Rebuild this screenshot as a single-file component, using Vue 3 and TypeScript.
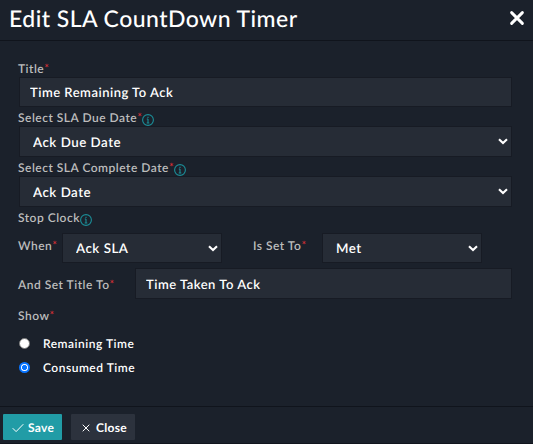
<script setup lang="ts">
import { ref } from 'vue'

const title = ref('Time Remaining To Ack')
const dueDate = ref('Ack Due Date')
const completeDate = ref('Ack Date')
const clock = ref('Ack SLA')
const state = ref('Met')
const stoppedTitle = ref('Time Taken To Ack')
const show = ref('Consumed Time')
const showOptions: string[] = ['Remaining Time', 'Consumed Time']
</script>

<template>
  <form class="dialog" @submit.prevent>
    <header class="header">
      <h1>Edit SLA CountDown Timer</h1>
      <button type="button" class="dismiss" aria-label="Close dialog">
        <svg width="16" height="16" viewBox="0 0 16 16"><path d="M2.6 2.6 13.4 13.4M13.4 2.6 2.6 13.4" /></svg>
      </button>
    </header>

    <main class="body">
      <label class="label first"><span>Title</span><i>*</i></label>
      <input v-model="title" class="control text-main" />

      <label class="label"><span>Select SLA Due Date</span><i>*</i>
        <svg class="info" viewBox="0 0 12 12"><circle cx="6" cy="6" r="5.4" /><path d="M6 5v4M4.8 5H6M4.7 9h2.6M6 2.7v1.2" /></svg>
      </label>
      <div class="select">
        <select v-model="dueDate" class="control"><option>Ack Due Date</option></select>
        <svg class="chevron" viewBox="0 0 10 7"><path d="M1 1.2 5 5.1 9 1.2" /></svg>
      </div>

      <label class="label"><span>Select SLA Complete Date</span><i>*</i>
        <svg class="info" viewBox="0 0 12 12"><circle cx="6" cy="6" r="5.4" /><path d="M6 5v4M4.8 5H6M4.7 9h2.6M6 2.7v1.2" /></svg>
      </label>
      <div class="select">
        <select v-model="completeDate" class="control"><option>Ack Date</option></select>
        <svg class="chevron" viewBox="0 0 10 7"><path d="M1 1.2 5 5.1 9 1.2" /></svg>
      </div>

      <div class="label stop"><span>Stop Clock</span>
        <svg class="info" viewBox="0 0 12 12"><circle cx="6" cy="6" r="5.4" /><path d="M6 5v4M4.8 5H6M4.7 9h2.6M6 2.7v1.2" /></svg>
      </div>

      <div class="condition">
        <label class="label"><span>When</span><i>*</i></label>
        <div class="select">
          <select v-model="clock" class="control"><option>Ack SLA</option></select>
          <svg class="chevron" viewBox="0 0 10 7"><path d="M1 1.2 5 5.1 9 1.2" /></svg>
        </div>
        <label class="label"><span>Is Set To</span><i>*</i></label>
        <div class="select">
          <select v-model="state" class="control"><option>Met</option></select>
          <svg class="chevron" viewBox="0 0 10 7"><path d="M1 1.2 5 5.1 9 1.2" /></svg>
        </div>
      </div>

      <div class="retitle">
        <label class="label"><span>And Set Title To</span><i>*</i></label>
        <input v-model="stoppedTitle" class="control" />
      </div>

      <div class="label show"><span>Show</span><i>*</i></div>
      <label v-for="option in showOptions" :key="option" class="radio">
        <input v-model="show" type="radio" name="show" :value="option" />
        <span>{{ option }}</span>
      </label>
    </main>

    <footer class="footer">
      <button type="submit" class="btn save">
        <svg width="12" height="10" viewBox="0 0 12 10"><path d="M.7 5.2 4.1 8.6 11.3 1.2" /></svg>
        <span>Save</span>
      </button>
      <button type="button" class="btn close">
        <svg width="8" height="8" viewBox="0 0 8 8"><path d="M.7.7 7.3 7.3M7.3.7.7 7.3" /></svg>
        <span>Close</span>
      </button>
    </footer>
  </form>
</template>

<style>
body {
  background: #1b212b;
}
</style>

<style scoped>
* {
  box-sizing: border-box;
}
.dialog {
  display: flex;
  flex-direction: column;
  width: 533px;
  height: 444px;
  overflow: hidden;
  background: #1b212b;
  border-bottom: 1px solid #11151d;
  color: #fff;
  font-family: Lato, "Liberation Sans", sans-serif;
  font-size: 13px;
  font-weight: 600;
  text-rendering: geometricPrecision;
}
svg {
  display: block;
  flex: none;
  fill: none;
  stroke: currentColor;
}
button {
  border: 0;
  padding: 0;
  color: inherit;
  font: inherit;
  text-rendering: inherit;
}
.header {
  display: flex;
  align-items: center;
  justify-content: space-between;
  height: 41px;
  padding: 0 8px 4px 9px;
  border-bottom: 1px solid #10141c;
}
h1 {
  margin: 0;
  font-size: 23px;
  line-height: 28px;
  font-weight: 500;
  letter-spacing: 0.45px;
}
.dismiss {
  background: none;
}
.dismiss svg {
  stroke-width: 2.9;
  stroke-linecap: round;
}
.body {
  display: flex;
  flex-direction: column;
  height: 365px;
  padding: 20px 21px 0 19px;
}
.label {
  display: flex;
  align-items: center;
  height: 19px;
  margin-left: -1px;
  padding-top: 3px;
  color: #bcbcbc;
  font-size: 12px;
  line-height: 16px;
  letter-spacing: 0.5px;
  white-space: nowrap;
}
.label i {
  color: #d92f35;
  font-style: normal;
  font-size: 11px;
  letter-spacing: 0;
}
.label.first {
  height: 16px;
  padding: 0;
}
.info {
  width: 12px;
  height: 12px;
  margin-top: 3px;
  color: #1b8e98;
  stroke-width: 1.1;
}
.control {
  display: block;
  width: 100%;
  height: 31px;
  margin: 0;
  padding: 0 10px;
  appearance: none;
  border: 1px solid #171b24;
  border-radius: 0;
  outline: 0;
  background: #262c36;
  color: #fff;
  font: inherit;
  letter-spacing: 0.5px;
  text-rendering: inherit;
}
.text-main {
  height: 30px;
}
.select {
  display: grid;
  align-items: center;
}
.select > * {
  grid-area: 1 / 1;
}
.select .control {
  padding: 0 13px;
  font-size: 13.33px;
}
.chevron {
  justify-self: end;
  width: 10px;
  height: 7px;
  margin-right: 4px;
  stroke-width: 2.1;
  pointer-events: none;
}
.stop {
  height: 22px;
  padding-top: 0;
}
.condition {
  display: grid;
  grid-template-columns: 43px 160px 100px 160px;
  margin-top: 4px;
}
.condition .control {
  height: 30px;
}
.condition .label {
  height: 26px;
  padding: 0;
}
.condition .label:nth-child(3) {
  padding-left: 32px;
}
.retitle {
  display: grid;
  grid-template-columns: 116px 1fr;
  margin-top: 5px;
}
.retitle .label {
  height: 33px;
  padding: 0;
}
.show {
  height: 30px;
  padding: 0;
}
.radio {
  display: flex;
  align-items: center;
  gap: 13px;
  height: 24px;
  font-size: 12px;
  letter-spacing: 0.5px;
}
.radio input {
  width: 11px;
  height: 11px;
  margin: 0;
  appearance: none;
  border: 1px solid #777;
  border-radius: 50%;
  background: #fff;
}
.radio input:checked {
  border: 2px solid #0874ff;
  background: radial-gradient(circle, #0874ff 0 2.2px, #fff 2.9px);
}
.footer {
  display: flex;
  gap: 9px;
  flex: 1;
  padding: 7px 3px 0;
  border-top: 1px solid #10141c;
}
.btn {
  display: flex;
  align-items: center;
  height: 26px;
  border-radius: 1px;
  font-size: 12px;
  font-weight: 700;
  letter-spacing: 0.3px;
}
.btn svg {
  margin-top: 2px;
}
.save {
  width: 59px;
  padding-left: 9px;
  gap: 4px;
  background: #219ca6;
}
.close {
  width: 64px;
  padding-left: 11px;
  gap: 6px;
  background: #2c323d;
}
</style>
